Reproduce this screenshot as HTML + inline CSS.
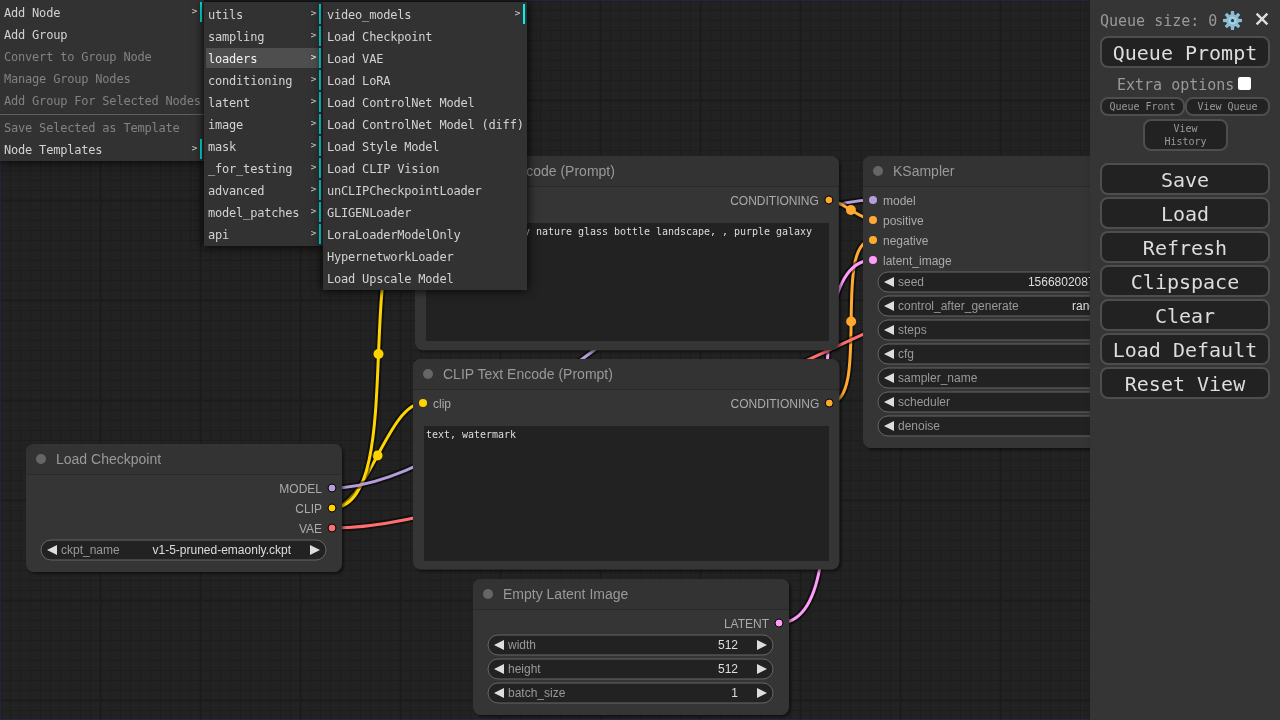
<!DOCTYPE html><html><head><meta charset="utf-8"><title>ComfyUI</title><style>

html,body{margin:0;padding:0;background:#222;}
body{width:1280px;height:720px;position:relative;overflow:hidden;font-family:"DejaVu Sans Mono", "Liberation Mono", monospace;}
#root{position:absolute;left:0;top:0;width:1280px;height:720px;will-change:transform;}
#cv{position:absolute;left:0;top:0;}
#cv text{font-family:"Liberation Sans", Arial, sans-serif;}
.ta{position:absolute;background:#222;color:#ddd;font-family:"DejaVu Sans Mono", "Liberation Mono", monospace;font-size:10px;line-height:12px;padding:3px 2px 2px 2px;box-sizing:border-box;overflow:hidden;white-space:pre-wrap;word-wrap:break-word;letter-spacing:-0.02px;}
.panel{position:absolute;left:1090px;top:0;width:190px;height:720px;background:#353535;color:#999;font-family:"DejaVu Sans Mono", "Liberation Mono", monospace;font-size:15px;box-shadow:3px 3px 8px rgba(0,0,0,0.4);}
.panel .b{position:absolute;left:10px;width:170px;height:32px;box-sizing:border-box;border:2px solid #4e4e4e;border-radius:8px;background:#222;color:#ddd;font-size:20px;line-height:26px;text-align:center;padding:2px 6px 0 6px;white-space:nowrap;}
.panel .s{position:absolute;box-sizing:border-box;border:2px solid #4e4e4e;border-radius:8px;background:#222;color:#999;font-size:10px;line-height:13px;text-align:center;padding:1px 6px;}
.panel .t{position:absolute;white-space:nowrap;line-height:20px;}
.cm{position:absolute;background:#323232;box-shadow:0 0 10px #000;font-family:"DejaVu Sans Mono", "Liberation Mono", monospace;font-size:12px;color:#d2d2d2;box-sizing:border-box;padding:0;}
.cm .e{margin:2px;padding:3px 2px 1px 2px;height:16px;line-height:16px;white-space:nowrap;position:relative;letter-spacing:-0.2px;}
.cm .e.sub{border-right:2px solid #00f2f2;padding-right:20px;}
.cm .e.sub::after{content:">";position:absolute;top:1.3px;right:2.5px;font-size:9.5px;line-height:16px;letter-spacing:0;}
.cm .e.dis{color:#828282;}
.cm .e.hov{background:#4e4e4e;color:#f2f2f2;}
.cm .sep{height:0;border-top:1px solid #313131;border-bottom:1px solid #5f5f5f;margin:3px 0 2px 0;}

</style></head><body><div id="root">
<svg id="cv" width="1280" height="720" viewBox="0 0 1280 720">
<defs>
<pattern id="grid" width="100" height="100" patternUnits="userSpaceOnUse">
<rect width="100" height="100" fill="#222"/>
<path d="M10 0V100M0 10H100M20 0V100M0 20H100M30 0V100M0 30H100M40 0V100M0 40H100M50 0V100M0 50H100M60 0V100M0 60H100M70 0V100M0 70H100M80 0V100M0 80H100M90 0V100M0 90H100" stroke="#1d1d1d" stroke-width="1" transform="translate(0.5 0.5)"/>
<path d="M0 0V100M0 0H100M100 0V100M0 100H100" stroke="#1b1b1b" stroke-width="2" transform="translate(0.5 0.5)"/>
</pattern>
<filter id="sh" x="-5%" y="-5%" width="112%" height="115%"><feDropShadow dx="2" dy="2" stdDeviation="1.5" flood-color="#000" flood-opacity="0.5"/></filter>
</defs>
<rect width="1280" height="720" fill="url(#grid)"/>
<rect x="0" y="0" width="1280" height="720" fill="none" stroke="#223355" stroke-width="1"/>
<g fill="none" stroke-linejoin="round">
<path d="M332 508C366.74 508 388.26 403 423 403" stroke="rgba(0,0,0,0.5)" stroke-width="7"/><path d="M332 508C366.74 508 388.26 403 423 403" stroke="#FFD500" stroke-width="3"/><circle cx="377.5" cy="455.5" r="5" fill="#FFD500"/>
<path d="M332 508C412.43 508 344.57 200 425 200" stroke="rgba(0,0,0,0.5)" stroke-width="7"/><path d="M332 508C412.43 508 344.57 200 425 200" stroke="#FFD500" stroke-width="3"/><circle cx="378.5" cy="354" r="5" fill="#FFD500"/>
<path d="M332 488C485.22 488 719.78 200 873 200" stroke="rgba(0,0,0,0.5)" stroke-width="7"/><path d="M332 488C485.22 488 719.78 200 873 200" stroke="#B39DDB" stroke-width="3"/><circle cx="602.5" cy="344" r="5" fill="#B39DDB"/>
<path d="M828.85 200C840.96 200 860.88 220 873 220" stroke="rgba(0,0,0,0.5)" stroke-width="7"/><path d="M828.85 200C840.96 200 860.88 220 873 220" stroke="#FFA931" stroke-width="3"/><circle cx="850.92" cy="210" r="5" fill="#FFA931"/>
<path d="M829.28 403C871.47 403 830.81 240 873 240" stroke="rgba(0,0,0,0.5)" stroke-width="7"/><path d="M829.28 403C871.47 403 830.81 240 873 240" stroke="#FFA931" stroke-width="3"/><circle cx="851.14" cy="321.5" r="5" fill="#FFA931"/>
<path d="M779 623C872.74 623 779.26 260 873 260" stroke="rgba(0,0,0,0.5)" stroke-width="7"/><path d="M779 623C872.74 623 779.26 260 873 260" stroke="#FF9CF9" stroke-width="3"/><circle cx="826" cy="441.5" r="5" fill="#FF9CF9"/>
<path d="M1169 200C1181.51 200 1206.49 202 1219 202" stroke="rgba(0,0,0,0.5)" stroke-width="7"/><path d="M1169 200C1181.51 200 1206.49 202 1219 202" stroke="#FF9CF9" stroke-width="3"/><circle cx="1194" cy="201" r="5" fill="#FF9CF9"/>
<path d="M332 528C566.57 528 984.43 222 1219 222" stroke="rgba(0,0,0,0.5)" stroke-width="7"/><path d="M332 528C566.57 528 984.43 222 1219 222" stroke="#FF6E6E" stroke-width="3"/><circle cx="775.5" cy="375" r="5" fill="#FF6E6E"/>
</g>
<g transform="translate(413 389)"><path d="M8 -30H418.28A8 8 0 0 1 426.28 -22V172.61A8 8 0 0 1 418.28 180.61H8A8 8 0 0 1 0 172.61V-22A8 8 0 0 1 8 -30Z" fill="#353535" filter="url(#sh)"/><rect x="0" y="-1" width="426.28" height="2" fill="rgba(0,0,0,0.2)"/><path d="M8 -30H418.28A8 8 0 0 1 426.28 -22V0H0V-22A8 8 0 0 1 8 -30Z" fill="#333"/><circle cx="15" cy="-15" r="5" fill="#666"/><text x="30" y="-10" font-size="14" fill="#999">CLIP Text Encode (Prompt)</text><circle cx="10" cy="14" r="4" fill="#FFD500"/><text x="20" y="19" font-size="12" fill="#AAA">clip</text><circle cx="416.28" cy="14" r="4" fill="#FFA931" stroke="#000" stroke-width="1"/><text x="406.28" y="19" font-size="12" fill="#AAA" text-anchor="end">CONDITIONING</text></g>
<g transform="translate(415 186)"><path d="M8 -30H415.85A8 8 0 0 1 423.85 -22V156.31A8 8 0 0 1 415.85 164.31H8A8 8 0 0 1 0 156.31V-22A8 8 0 0 1 8 -30Z" fill="#353535" filter="url(#sh)"/><rect x="0" y="-1" width="423.85" height="2" fill="rgba(0,0,0,0.2)"/><path d="M8 -30H415.85A8 8 0 0 1 423.85 -22V0H0V-22A8 8 0 0 1 8 -30Z" fill="#333"/><circle cx="15" cy="-15" r="5" fill="#666"/><text x="30" y="-10" font-size="14" fill="#999">CLIP Text Encode (Prompt)</text><circle cx="10" cy="14" r="4" fill="#FFD500"/><text x="20" y="19" font-size="12" fill="#AAA">clip</text><circle cx="413.85" cy="14" r="4" fill="#FFA931" stroke="#000" stroke-width="1"/><text x="403.85" y="19" font-size="12" fill="#AAA" text-anchor="end">CONDITIONING</text></g>
<g transform="translate(473 609)"><path d="M8 -30H308A8 8 0 0 1 316 -22V98A8 8 0 0 1 308 106H8A8 8 0 0 1 0 98V-22A8 8 0 0 1 8 -30Z" fill="#353535" filter="url(#sh)"/><rect x="0" y="-1" width="316" height="2" fill="rgba(0,0,0,0.2)"/><path d="M8 -30H308A8 8 0 0 1 316 -22V0H0V-22A8 8 0 0 1 8 -30Z" fill="#333"/><circle cx="15" cy="-15" r="5" fill="#666"/><text x="30" y="-10" font-size="14" fill="#999">Empty Latent Image</text><circle cx="306" cy="14" r="4" fill="#FF9CF9" stroke="#000" stroke-width="1"/><text x="296" y="19" font-size="12" fill="#AAA" text-anchor="end">LATENT</text><rect x="15" y="26" width="285" height="20" rx="10" fill="#222" stroke="#666" stroke-width="1"/><path d="M31 31 L21 36 L31 41Z" fill="#DDD"/><path d="M284 31 L294 36 L284 41Z" fill="#DDD"/><text x="35" y="40" font-size="12" fill="#999">width</text><text x="265" y="40" font-size="12" fill="#DDD" text-anchor="end">512</text><rect x="15" y="50" width="285" height="20" rx="10" fill="#222" stroke="#666" stroke-width="1"/><path d="M31 55 L21 60 L31 65Z" fill="#DDD"/><path d="M284 55 L294 60 L284 65Z" fill="#DDD"/><text x="35" y="64" font-size="12" fill="#999">height</text><text x="265" y="64" font-size="12" fill="#DDD" text-anchor="end">512</text><rect x="15" y="74" width="285" height="20" rx="10" fill="#222" stroke="#666" stroke-width="1"/><path d="M31 79 L21 84 L31 89Z" fill="#DDD"/><path d="M284 79 L294 84 L284 89Z" fill="#DDD"/><text x="35" y="88" font-size="12" fill="#999">batch_size</text><text x="265" y="88" font-size="12" fill="#DDD" text-anchor="end">1</text></g>
<g transform="translate(863 186)"><path d="M8 -30H308A8 8 0 0 1 316 -22V254A8 8 0 0 1 308 262H8A8 8 0 0 1 0 254V-22A8 8 0 0 1 8 -30Z" fill="#353535" filter="url(#sh)"/><rect x="0" y="-1" width="316" height="2" fill="rgba(0,0,0,0.2)"/><path d="M8 -30H308A8 8 0 0 1 316 -22V0H0V-22A8 8 0 0 1 8 -30Z" fill="#333"/><circle cx="15" cy="-15" r="5" fill="#666"/><text x="30" y="-10" font-size="14" fill="#999">KSampler</text><circle cx="10" cy="14" r="4" fill="#B39DDB"/><text x="20" y="19" font-size="12" fill="#AAA">model</text><circle cx="10" cy="34" r="4" fill="#FFA931"/><text x="20" y="39" font-size="12" fill="#AAA">positive</text><circle cx="10" cy="54" r="4" fill="#FFA931"/><text x="20" y="59" font-size="12" fill="#AAA">negative</text><circle cx="10" cy="74" r="4" fill="#FF9CF9"/><text x="20" y="79" font-size="12" fill="#AAA">latent_image</text><circle cx="306" cy="14" r="4" fill="#FF9CF9" stroke="#000" stroke-width="1"/><text x="296" y="19" font-size="12" fill="#AAA" text-anchor="end">LATENT</text><rect x="15" y="86" width="285" height="20" rx="10" fill="#222" stroke="#666" stroke-width="1"/><path d="M31 91 L21 96 L31 101Z" fill="#DDD"/><path d="M284 91 L294 96 L284 101Z" fill="#DDD"/><text x="35" y="100" font-size="12" fill="#999">seed</text><text x="265" y="100" font-size="12" fill="#DDD" text-anchor="end">156680208700286</text><rect x="15" y="110" width="285" height="20" rx="10" fill="#222" stroke="#666" stroke-width="1"/><path d="M31 115 L21 120 L31 125Z" fill="#DDD"/><path d="M284 115 L294 120 L284 125Z" fill="#DDD"/><text x="35" y="124" font-size="12" fill="#999">control_after_generate</text><text x="265" y="124" font-size="12" fill="#DDD" text-anchor="end">randomize</text><rect x="15" y="134" width="285" height="20" rx="10" fill="#222" stroke="#666" stroke-width="1"/><path d="M31 139 L21 144 L31 149Z" fill="#DDD"/><path d="M284 139 L294 144 L284 149Z" fill="#DDD"/><text x="35" y="148" font-size="12" fill="#999">steps</text><text x="265" y="148" font-size="12" fill="#DDD" text-anchor="end">20</text><rect x="15" y="158" width="285" height="20" rx="10" fill="#222" stroke="#666" stroke-width="1"/><path d="M31 163 L21 168 L31 173Z" fill="#DDD"/><path d="M284 163 L294 168 L284 173Z" fill="#DDD"/><text x="35" y="172" font-size="12" fill="#999">cfg</text><text x="265" y="172" font-size="12" fill="#DDD" text-anchor="end">8.0</text><rect x="15" y="182" width="285" height="20" rx="10" fill="#222" stroke="#666" stroke-width="1"/><path d="M31 187 L21 192 L31 197Z" fill="#DDD"/><path d="M284 187 L294 192 L284 197Z" fill="#DDD"/><text x="35" y="196" font-size="12" fill="#999">sampler_name</text><text x="265" y="196" font-size="12" fill="#DDD" text-anchor="end">euler</text><rect x="15" y="206" width="285" height="20" rx="10" fill="#222" stroke="#666" stroke-width="1"/><path d="M31 211 L21 216 L31 221Z" fill="#DDD"/><path d="M284 211 L294 216 L284 221Z" fill="#DDD"/><text x="35" y="220" font-size="12" fill="#999">scheduler</text><text x="265" y="220" font-size="12" fill="#DDD" text-anchor="end">normal</text><rect x="15" y="230" width="285" height="20" rx="10" fill="#222" stroke="#666" stroke-width="1"/><path d="M31 235 L21 240 L31 245Z" fill="#DDD"/><path d="M284 235 L294 240 L284 245Z" fill="#DDD"/><text x="35" y="244" font-size="12" fill="#999">denoise</text><text x="265" y="244" font-size="12" fill="#DDD" text-anchor="end">1.00</text></g>
<g transform="translate(1209 188)"><path d="M8 -30H203A8 8 0 0 1 211 -22V38A8 8 0 0 1 203 46H8A8 8 0 0 1 0 38V-22A8 8 0 0 1 8 -30Z" fill="#353535" filter="url(#sh)"/><rect x="0" y="-1" width="211" height="2" fill="rgba(0,0,0,0.2)"/><path d="M8 -30H203A8 8 0 0 1 211 -22V0H0V-22A8 8 0 0 1 8 -30Z" fill="#333"/><circle cx="15" cy="-15" r="5" fill="#666"/><text x="30" y="-10" font-size="14" fill="#999">VAE Decode</text><circle cx="10" cy="14" r="4" fill="#FF9CF9"/><text x="20" y="19" font-size="12" fill="#AAA">samples</text><circle cx="10" cy="34" r="4" fill="#FF6E6E"/><text x="20" y="39" font-size="12" fill="#AAA">vae</text><circle cx="201" cy="14" r="4" fill="#64B5F6" stroke="#000" stroke-width="1"/><text x="191" y="19" font-size="12" fill="#AAA" text-anchor="end">IMAGE</text></g>
<g transform="translate(26 474)"><path d="M8 -30H308A8 8 0 0 1 316 -22V90A8 8 0 0 1 308 98H8A8 8 0 0 1 0 90V-22A8 8 0 0 1 8 -30Z" fill="#353535" filter="url(#sh)"/><rect x="0" y="-1" width="316" height="2" fill="rgba(0,0,0,0.2)"/><path d="M8 -30H308A8 8 0 0 1 316 -22V0H0V-22A8 8 0 0 1 8 -30Z" fill="#333"/><circle cx="15" cy="-15" r="5" fill="#666"/><text x="30" y="-10" font-size="14" fill="#999">Load Checkpoint</text><circle cx="306" cy="14" r="4" fill="#B39DDB" stroke="#000" stroke-width="1"/><text x="296" y="19" font-size="12" fill="#AAA" text-anchor="end">MODEL</text><circle cx="306" cy="34" r="4" fill="#FFD500" stroke="#000" stroke-width="1"/><text x="296" y="39" font-size="12" fill="#AAA" text-anchor="end">CLIP</text><circle cx="306" cy="54" r="4" fill="#FF6E6E" stroke="#000" stroke-width="1"/><text x="296" y="59" font-size="12" fill="#AAA" text-anchor="end">VAE</text><rect x="15" y="66" width="285" height="20" rx="10" fill="#222" stroke="#666" stroke-width="1"/><path d="M31 71 L21 76 L31 81Z" fill="#DDD"/><path d="M284 71 L294 76 L284 81Z" fill="#DDD"/><text x="35" y="80" font-size="12" fill="#999">ckpt_name</text><text x="265" y="80" font-size="12" fill="#DDD" text-anchor="end">v1-5-pruned-emaonly.ckpt</text></g>
</svg>
<div class="ta" style="left:426px;top:223px;width:402.8px;height:118.3px">beautiful scenery nature glass bottle landscape, , purple galaxy bottle,</div>
<div class="ta" style="left:424px;top:426px;width:405.3px;height:134.6px">text, watermark</div>
<div class="panel">
<div class="t" style="left:10px;top:11px">Queue size: 0</div>
<svg style="position:absolute;left:132px;top:10px" width="21" height="21" viewBox="-10.5 -10.5 21 21"><path d="M-1.83 -5.71L-1.53 -9.48L1.53 -9.48L1.83 -5.71L2.75 -5.33L5.62 -7.78L7.78 -5.62L5.33 -2.75L5.71 -1.83L9.48 -1.53L9.48 1.53L5.71 1.83L5.33 2.75L7.78 5.62L5.62 7.78L2.75 5.33L1.83 5.71L1.53 9.48L-1.53 9.48L-1.83 5.71L-2.75 5.33L-5.62 7.78L-7.78 5.62L-5.33 2.75L-5.71 1.83L-9.48 1.53L-9.48 -1.53L-5.71 -1.83L-5.33 -2.75L-7.78 -5.62L-5.62 -7.78L-2.75 -5.33Z" fill="#89bed5"/><circle r="6.3" fill="#89bed5"/><circle r="3.2" fill="none" stroke="#a9d6e6" stroke-width="1.2"/><circle r="1.5" fill="#2b3033"/></svg>
<svg style="position:absolute;left:164px;top:11px" width="16" height="16" viewBox="-8 -8 16 16"><path d="M-5.4 -5.4L5.4 5.4M5.4 -5.4L-5.4 5.4" stroke="#ddd" stroke-width="2.4" fill="none"/></svg>
<div class="b" style="top:36px">Queue Prompt</div>
<div class="t" style="left:27px;top:75px">Extra options</div>
<div style="position:absolute;left:148px;top:77px;width:13px;height:13px;background:#fff;border-radius:2px"></div>
<div class="s" style="left:10px;top:97px;width:85px;height:19px">Queue Front</div>
<div class="s" style="left:95px;top:97px;width:85px;height:19px">View Queue</div>
<div class="s" style="left:53px;top:119px;width:85px;height:32px">View<br>History</div>
<div class="b" style="top:163px">Save</div>
<div class="b" style="top:197px">Load</div>
<div class="b" style="top:231px">Refresh</div>
<div class="b" style="top:265px">Clipspace</div>
<div class="b" style="top:299px">Clear</div>
<div class="b" style="top:333px">Load Default</div>
<div class="b" style="top:367px">Reset View</div>
</div>
<div class="cm" style="left:0px;top:0px;width:204px"><div class="e sub">Add Node</div><div class="e ">Add Group</div><div class="e dis">Convert to Group Node</div><div class="e dis">Manage Group Nodes</div><div class="e dis">Add Group For Selected Nodes</div><div class="sep"></div><div class="e dis">Save Selected as Template</div><div class="e sub">Node Templates</div></div>
<div class="cm" style="left:204px;top:2px;width:119px"><div class="e sub">utils</div><div class="e sub">sampling</div><div class="e sub hov">loaders</div><div class="e sub">conditioning</div><div class="e sub">latent</div><div class="e sub">image</div><div class="e sub">mask</div><div class="e sub">_for_testing</div><div class="e sub">advanced</div><div class="e sub">model_patches</div><div class="e sub">api</div></div>
<div class="cm" style="left:323px;top:2px;width:204px"><div class="e sub">video_models</div><div class="e ">Load Checkpoint</div><div class="e ">Load VAE</div><div class="e ">Load LoRA</div><div class="e ">Load ControlNet Model</div><div class="e ">Load ControlNet Model (diff)</div><div class="e ">Load Style Model</div><div class="e ">Load CLIP Vision</div><div class="e ">unCLIPCheckpointLoader</div><div class="e ">GLIGENLoader</div><div class="e ">LoraLoaderModelOnly</div><div class="e ">HypernetworkLoader</div><div class="e ">Load Upscale Model</div></div>
</div></body></html>
